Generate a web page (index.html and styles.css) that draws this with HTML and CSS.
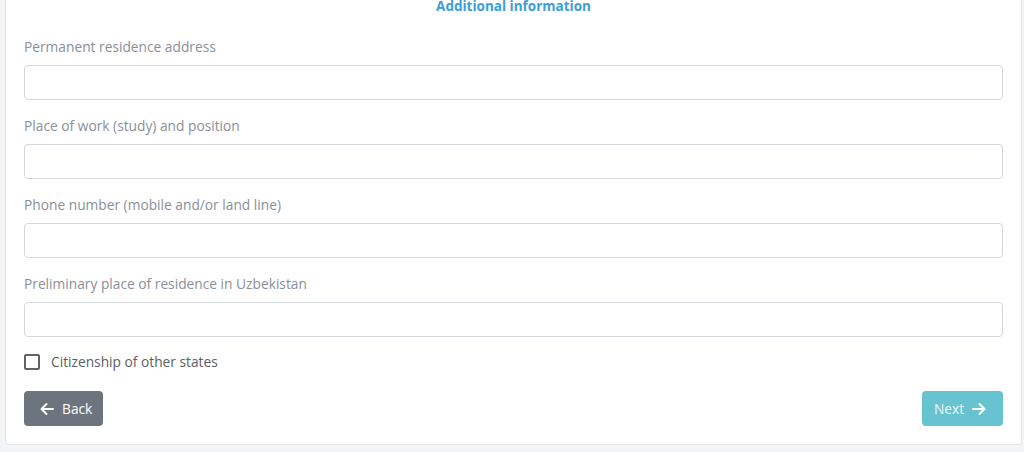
FILE: index.html
```html
<!DOCTYPE html>
<html>
<head>
<meta charset="utf-8">
<link rel="stylesheet" href="styles.css">
</head>
<body>
<div class="card">
  <div class="title">Additional information</div>
  <div class="field">
    <label class="lbl">Permanent residence address</label>
    <input class="inp" type="text">
  </div>
  <div class="field">
    <label class="lbl">Place of work (study) and position</label>
    <input class="inp" type="text">
  </div>
  <div class="field">
    <label class="lbl">Phone number (mobile and/or land line)</label>
    <input class="inp" type="text">
  </div>
  <div class="field">
    <label class="lbl">Preliminary place of residence in Uzbekistan</label>
    <input class="inp" type="text">
  </div>
  <label class="check"><span class="box"></span>Citizenship of other states</label>
  <div class="actions">
    <button class="btn back"><svg class="ico" width="16" height="16" viewBox="0 0 16 16"><path d="M14 8H2.5M7.5 3L2.5 8l5 5" fill="none" stroke="#fff" stroke-width="2" stroke-linecap="round" stroke-linejoin="round"/></svg>Back</button>
    <button class="btn next">Next<svg class="ico" width="16" height="16" viewBox="0 0 16 16"><path d="M2 8h11.5M8.5 3l5 5-5 5" fill="none" stroke="#fff" stroke-width="2" stroke-linecap="round" stroke-linejoin="round"/></svg></button>
  </div>
</div>
</body>
</html>
```
FILE: styles.css
```css
html, body { margin: 0; padding: 0; }
body {
  background: #f3f4f6;
  font-family: "Open Sans", "Noto Sans", sans-serif;
  font-size: 13.75px;
  height: 452px;
  overflow: hidden;
}
.card {
  margin: -10px 2px 0 5px;
  background: #fff;
  border: 1px solid #e2e4e8;
  border-top: none;
  border-radius: 0 0 4px 4px;
  padding: 6px 18px 18px 18px;
}
.title {
  text-align: center;
  color: #3c9ddb;
  font-weight: 700;
  font-size: 13.5px;
  line-height: 20px;
  margin-bottom: 21px;
}
.field { display: flex; flex-direction: column; margin-bottom: 16px; }
.lbl {
  color: #8a9099;
  line-height: 20px;
  margin-bottom: 8px;
}
.inp {
  box-sizing: border-box;
  height: 35px;
  width: 100%;
  border: 1px solid #d4d7dc;
  border-radius: 4px;
  margin: 0;
  background: #fff;
}
.check {
  display: flex;
  align-items: center;
  color: #5a5f66;
  line-height: 20px;
  margin-top: -1px;
}
.box {
  box-sizing: border-box;
  width: 16px; height: 16px;
  border: 2px solid #5f6368;
  border-radius: 2px;
  margin-right: 11px;
}
.actions {
  display: flex;
  justify-content: space-between;
  margin-top: 19px;
}
.btn {
  box-sizing: border-box;
  height: 35px;
  border: none;
  border-radius: 4px;
  color: #fff;
  font-family: inherit;
  font-size: 13.75px;
  display: flex;
  align-items: center;
  gap: 7px;
  padding: 0;
}
.ico { flex: none; }
.back { background: #6c757d; width: 79px; padding-left: 15px; }
.next { background: #68c3d1; width: 81px; padding-left: 12px; color: #eef9fb; }
```
